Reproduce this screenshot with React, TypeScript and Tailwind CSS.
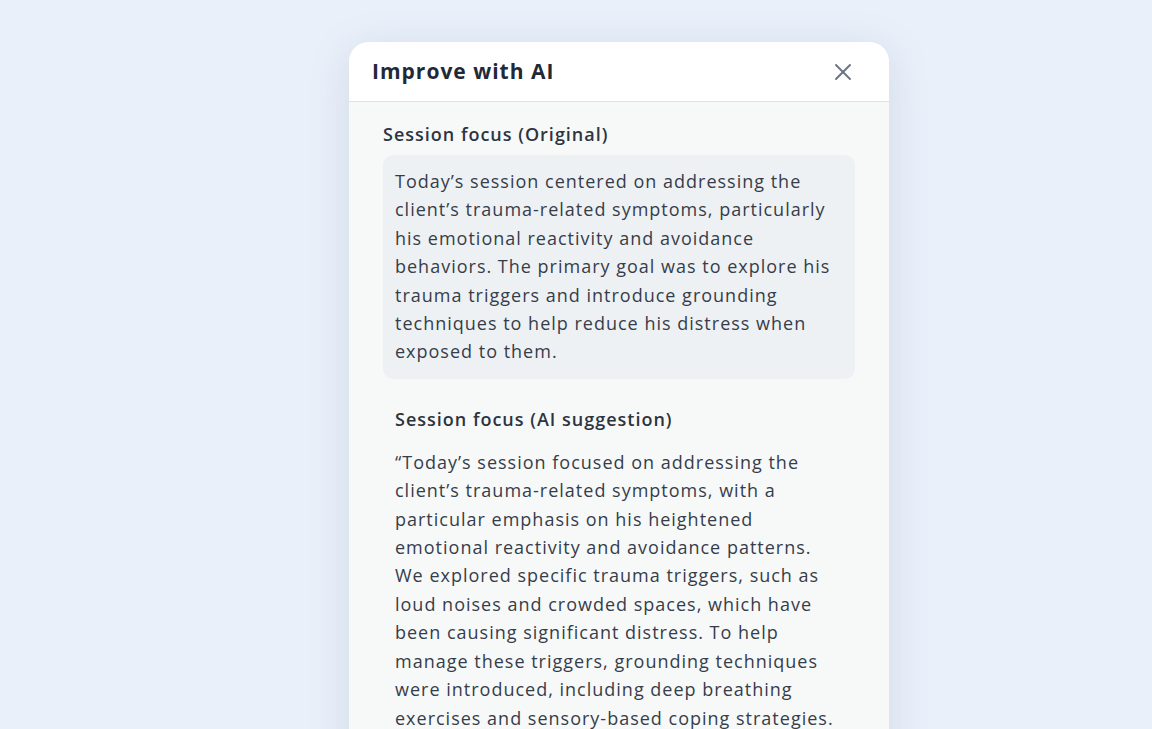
import React from 'react';
import { X } from 'lucide-react';

const original =
  'Today\u2019s session centered on addressing the client\u2019s trauma-related symptoms, particularly his emotional reactivity and avoidance behaviors. The primary goal was to explore his trauma triggers and introduce grounding techniques to help reduce his distress when exposed to them.';

const suggestion =
  '\u201CToday\u2019s session focused on addressing the client\u2019s trauma-related symptoms, with a particular emphasis on his heightened emotional reactivity and avoidance patterns. We explored specific trauma triggers, such as loud noises and crowded spaces, which have been causing significant distress. To help manage these triggers, grounding techniques were introduced, including deep breathing exercises and sensory-based coping strategies. We also discussed the importance of practicing these techniques daily.\u201D';

export default function App() {
  return (
    <div
      className="h-screen w-full overflow-hidden bg-[#e9f0fa] flex pl-[349px] pt-[42px]"
      style={{ fontFamily: '"Open Sans", "Noto Sans", sans-serif' }}
    >
      <div className="w-[540px] shrink-0 self-start rounded-[20px] overflow-hidden bg-[#f7f9f9] shadow-[0_8px_40px_rgba(100,116,139,0.18)]">
        <div className="h-[60px] bg-white border-b border-[#dfe2e6] flex items-center justify-between pl-[23px] pr-[32px]">
          <h2 className="text-[21px] font-bold tracking-[1px] text-[#1f2937]">Improve with AI</h2>
          <button className="text-[#6b7280]" aria-label="Close">
            <X className="w-7 h-7" strokeWidth={1.6} />
          </button>
        </div>

        <div className="px-[34px] pt-5 pb-8">
          <p className="text-[18px] leading-6 font-semibold tracking-[1px] text-[#2d3440] mb-[9px]">
            Session focus (Original)
          </p>
          <div className="rounded-[10px] bg-[#eef1f4] px-3 pt-3 pb-[13px]">
            <p className="text-[18px] leading-[28.4px] tracking-[1px] text-[#363d4a]">{original}</p>
          </div>

          <div className="mt-4 px-3 pt-3">
            <p className="text-[18px] leading-6 font-semibold tracking-[1px] text-[#2d3440] mb-[17px]">
              Session focus (AI suggestion)
            </p>
            <p className="text-[18px] leading-[28.4px] tracking-[1px] text-[#363d4a]">{suggestion}</p>
          </div>
        </div>
      </div>
    </div>
  );
}
